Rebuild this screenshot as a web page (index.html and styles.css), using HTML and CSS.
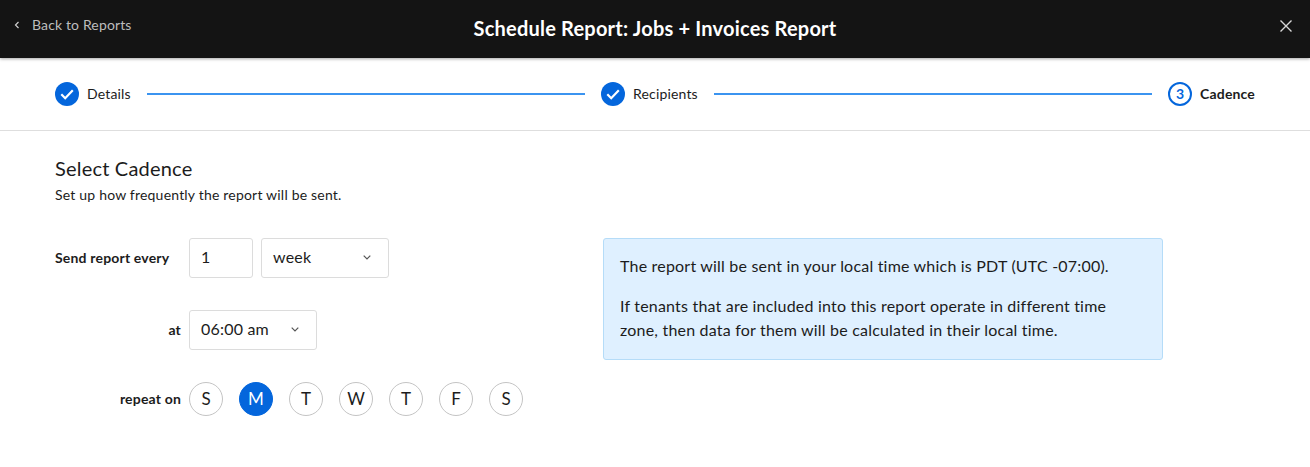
FILE: index.html
```html
<!DOCTYPE html>
<html lang="en">
<head>
<meta charset="utf-8">
<title>Schedule Report</title>
<link rel="stylesheet" href="styles.css">
</head>
<body>
<header class="topbar">
  <a class="back"><svg class="back-icon" width="6" height="8" viewBox="0 0 6 8"><path d="M4.5 1 1.5 4l3 3" fill="none" stroke="#cfcfcf" stroke-width="1.2"/></svg>Back to Reports</a>
  <h1 class="title">Schedule Report: Jobs + Invoices Report</h1>
  <svg class="close" width="14" height="14" viewBox="0 0 14 14"><path d="M1.5 1.5l11 11M12.5 1.5l-11 11" stroke="#d8d8d8" stroke-width="1.4" fill="none"/></svg>
</header>
<nav class="stepper">
  <div class="step">
    <svg class="step-icon" width="24" height="24" viewBox="0 0 24 24"><circle cx="12" cy="12" r="12" fill="#0466dc"/><path d="M6.3 12.3l3.9 3.9 7.6-7.9" fill="none" stroke="#fff" stroke-width="2.2"/></svg>
    <span class="step-text">Details</span>
  </div>
  <div class="line"></div>
  <div class="step">
    <svg class="step-icon" width="24" height="24" viewBox="0 0 24 24"><circle cx="12" cy="12" r="12" fill="#0466dc"/><path d="M6.3 12.3l3.9 3.9 7.6-7.9" fill="none" stroke="#fff" stroke-width="2.2"/></svg>
    <span class="step-text">Recipients</span>
  </div>
  <div class="line"></div>
  <div class="step current">
    <span class="step-num">3</span>
    <span class="step-text">Cadence</span>
  </div>
</nav>
<main class="content">
  <h2 class="heading">Select Cadence</h2>
  <p class="sub">Set up how frequently the report will be sent.</p>
  <div class="columns">
    <div class="form">
      <div class="row">
        <label class="label first">Send report every</label>
        <div class="field num">1</div>
        <div class="field sel week">week<svg class="chev" width="8" height="5" viewBox="0 0 8 5"><path d="M.7.7 4 4 7.3.7" fill="none" stroke="#555" stroke-width="1.2"/></svg></div>
      </div>
      <div class="row">
        <label class="label">at</label>
        <div class="field sel time">06:00 am<svg class="chev" width="8" height="5" viewBox="0 0 8 5"><path d="M.7.7 4 4 7.3.7" fill="none" stroke="#555" stroke-width="1.2"/></svg></div>
      </div>
      <div class="row days-row">
        <label class="label">repeat on</label>
        <div class="days">
          <span class="day">S</span>
          <span class="day on">M</span>
          <span class="day">T</span>
          <span class="day">W</span>
          <span class="day">T</span>
          <span class="day">F</span>
          <span class="day">S</span>
        </div>
      </div>
    </div>
    <aside class="note">
      <p>The report will be sent in your local time which is PDT (UTC -07:00).</p>
      <p>If tenants that are included into this report operate in different time<br>zone, then data for them will be calculated in their local time.</p>
    </aside>
  </div>
</main>
</body>
</html>
```
FILE: styles.css
```css
* { box-sizing: border-box; }
html, body { margin: 0; height: 100%; }
body { background: #fff; color: #1c1c1c; font-family: "Lato", "Noto Sans", sans-serif; overflow: hidden; }
.topbar { height: 58px; background: #141414; display: flex; align-items: center; justify-content: center; position: relative; box-shadow: 0 1px 3px rgba(0,0,0,.35); }
.back { position: absolute; left: 14px; top: 16px; display: flex; align-items: center; color: #bdbdbd; font-size: 14px; line-height: 18px; letter-spacing: .14px; }
.back-icon { margin-right: 12px; }
.title { margin: 0 0 2px; color: #fff; font-size: 20px; font-weight: 700; line-height: 24px; letter-spacing: .2px; }
.close { position: absolute; left: 1279px; top: 19px; }
.stepper { height: 73px; border-bottom: 1px solid #dedede; padding: 0 55px; display: flex; align-items: center; font-size: 14px; }
.step { display: flex; align-items: center; gap: 8px; }
.step-icon { display: block; }
.step-text { letter-spacing: .16px; margin-bottom: 2px; }
.line { flex: 1; height: 2px; background: #3b94f0; margin: 0 16px; }
.current { font-weight: 700; }
.step-num { width: 24px; height: 24px; border: 2px solid #0466dc; border-radius: 50%; display: flex; align-items: center; justify-content: center; color: #0466dc; font-size: 14px; font-weight: 700; padding-bottom: 2px; }
.content { padding: 25px 0 0 55px; }
.heading { margin: 0; font-size: 20px; font-weight: 400; line-height: 24px; letter-spacing: .2px; }
.sub { margin: 6px 0 0; font-size: 14px; line-height: 18px; letter-spacing: .2px; }
.columns { display: flex; margin-top: 34px; }
.form { width: 548px; display: flex; flex-direction: column; gap: 32px; }
.row { display: flex; align-items: center; gap: 8px; height: 40px; }
.days-row { height: 34px; }
.label { width: 126px; text-align: right; font-size: 14px; font-weight: 700; letter-spacing: .18px; margin-bottom: 2px; }
.first { text-align: left; }
.field { height: 40px; border: 1px solid #dcdcdc; border-radius: 3px; display: flex; align-items: center; padding: 0 11px 3px; font-size: 16px; letter-spacing: .2px; }
.chev { margin-top: 1px; }
.num { width: 64px; }
.sel { justify-content: space-between; padding-right: 17px; }
.week { width: 128px; }
.time { width: 128px; }
.days { display: flex; gap: 16px; }
.day { width: 34px; height: 34px; border: 1px solid #c4c4c4; border-radius: 50%; display: flex; align-items: center; justify-content: center; font-size: 17px; padding-bottom: 2px; }
.on { background: #0466dc; border-color: #0466dc; color: #fff; }
.note { width: 560px; height: 122px; background: #dff0ff; border: 1px solid #b5dcf8; border-radius: 3px; padding: 15px 16px; font-size: 16px; line-height: 24px; letter-spacing: .2px; }
.note p { margin: 0 0 16px; }
```
